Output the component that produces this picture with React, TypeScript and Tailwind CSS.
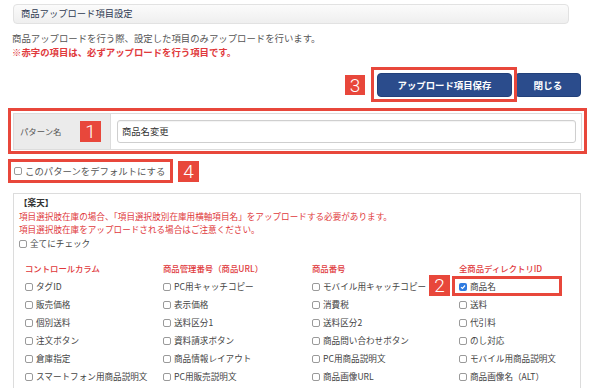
import React from "react";

function Box({ checked }: { checked?: boolean }) {
  if (checked) {
    return (
      <span className="w-[8px] h-[8px] rounded-[2px] bg-[#2f7be0] flex items-center justify-center shrink-0">
        <svg width="6" height="6" viewBox="0 0 6 6">
          <path d="M1 3.1 L2.5 4.5 L5 1.5" stroke="white" strokeWidth="1.2" fill="none" />
        </svg>
      </span>
    );
  }
  return <span className="w-[8px] h-[8px] rounded-[2px] border border-[#9a9a9a] bg-white shrink-0" />;
}

const cols = [
  {
    title: "コントロールカラム",
    items: ["タグID", "販売価格", "個別送料", "注文ボタン", "倉庫指定", "スマートフォン用商品説明文"],
  },
  {
    title: "商品管理番号（商品URL）",
    items: ["PC用キャッチコピー", "表示価格", "送料区分1", "資料請求ボタン", "商品情報レイアウト", "PC用販売説明文"],
  },
  {
    title: "商品番号",
    items: ["モバイル用キャッチコピー", "消費税", "送料区分2", "商品問い合わせボタン", "PC用商品説明文", "商品画像URL"],
  },
  {
    title: "全商品ディレクトリID",
    items: ["商品名", "送料", "代引料", "のし対応", "モバイル用商品説明文", "商品画像名（ALT）"],
  },
];

function Badge({ n, className }: { n: string; className: string }) {
  return (
    <div
      className={
        "absolute w-[21px] h-[21px] bg-[#e8473b] text-white flex items-center justify-center text-[19px] leading-none font-['Roboto',sans-serif] font-light " +
        className
      }
    >
      {n}
    </div>
  );
}

export default function App() {
  return (
    <div className="relative w-[594px] h-[388px] overflow-hidden bg-white font-['Noto_Sans_CJK_JP',sans-serif] text-[#555]">
      <div className="pl-[13px] pt-[4px]">
        {/* header bar */}
        <div className="w-[556px] h-[20px] rounded-[4px] border border-[#e2e2e2] bg-gradient-to-b from-[#fbfbfb] to-[#efefef] flex items-center pl-[7px] text-[9.3px] text-[#2f3a52]">
          商品アップロード項目設定
        </div>

        {/* description */}
        <div className="mt-[7px] ml-[-1px] text-[9.4px] leading-[14px]">
          <div>商品アップロードを行う際、設定した項目のみアップロードを行います。</div>
          <div className="text-[#e0393c] font-bold">※赤字の項目は、必ずアップロードを行う項目です。</div>
        </div>

        {/* buttons */}
        <div className="mt-[14px] w-[568px] flex justify-end gap-[3px]">
          <button className="w-[135px] h-[24px] rounded-[4px] bg-[#2b4c8c] border border-[#22407a] text-white font-bold text-[9.4px]">
            アップロード項目保存
          </button>
          <button className="w-[66px] h-[24px] rounded-[4px] bg-[#2b4c8c] border border-[#22407a] text-white font-bold text-[9.6px]">
            閉じる
          </button>
        </div>

        {/* pattern name */}
        <div className="mt-[16px] w-[569px] h-[37px] border border-[#dcdcdc] flex">
          <div className="w-[97px] bg-[#ebebeb] flex items-center pl-[6px] text-[8.4px] text-[#555] border-r border-[#dcdcdc]">
            パターン名
          </div>
          <div className="flex-1 flex items-center pl-[6px] pr-[5px]">
            <div className="w-full h-[23px] border border-[#cfcfcf] rounded-[3px] flex items-center pl-[4px] text-[9.3px] text-[#333] shadow-[inset_0_1px_1px_rgba(0,0,0,0.05)]">
              商品名変更
            </div>
          </div>
        </div>

        {/* default checkbox */}
        <div className="mt-[9px] h-[24px] flex items-center gap-[3px] pl-[1px] text-[9.4px] text-[#555]">
          <Box />
          <span>このパターンをデフォルトにする</span>
        </div>

        {/* rakuten panel */}
        <div className="mt-[10px] w-[568px] h-[220px] border border-[#dcdcdc] pl-[5px] pt-[2px]">
          <div className="text-[8.6px] leading-[13.5px] text-[#333] font-bold">【楽天】</div>
          <div className="text-[8.6px] leading-[13.5px] text-[#e0393c]">
            項目選択肢在庫の場合、「項目選択肢別在庫用横軸項目名」をアップロードする必要があります。
          </div>
          <div className="text-[8.6px] leading-[13.5px] text-[#e0393c]">
            項目選択肢在庫をアップロードされる場合はご注意ください。
          </div>
          <div className="h-[14px] flex items-center gap-[3px] text-[8.6px] text-[#444]">
            <Box />
            <span>全てにチェック</span>
          </div>

          <div className="mt-[9px] ml-[6px] grid grid-cols-[138px_149px_147px_1fr]">
            {cols.map((c) => (
              <div key={c.title} className="flex flex-col">
                <div className="h-[18px] flex items-center text-[8.4px] text-[#e0393c] font-medium">{c.title}</div>
                {c.items.map((it) => (
                  <div key={it} className="h-[18px] flex items-center gap-[3px] text-[8.6px] text-[#444]">
                    <Box checked={it === "商品名"} />
                    <span>{it}</span>
                  </div>
                ))}
              </div>
            ))}
          </div>
        </div>
      </div>

      {/* annotations */}
      <div className="absolute left-[371px] top-[67px] w-[146px] h-[35px] border-[3px] border-[#e8473b]" />
      <Badge n="3" className="left-[345px] top-[75px] !w-[20px] !h-[20px]" />
      <div className="absolute left-[8px] top-[108px] w-[579px] h-[46px] border-[3px] border-[#e8473b]" />
      <Badge n="1" className="left-[80px] top-[121px]" />
      <div className="absolute left-[8px] top-[159px] w-[165px] h-[24px] border-[3px] border-[#e8473b]" />
      <Badge n="4" className="left-[178px] top-[161px]" />
      <div className="absolute left-[452px] top-[276px] w-[110px] h-[20px] border-[3px] border-[#e8473b]" />
      <Badge n="2" className="left-[429px] top-[275px]" />
    </div>
  );
}
